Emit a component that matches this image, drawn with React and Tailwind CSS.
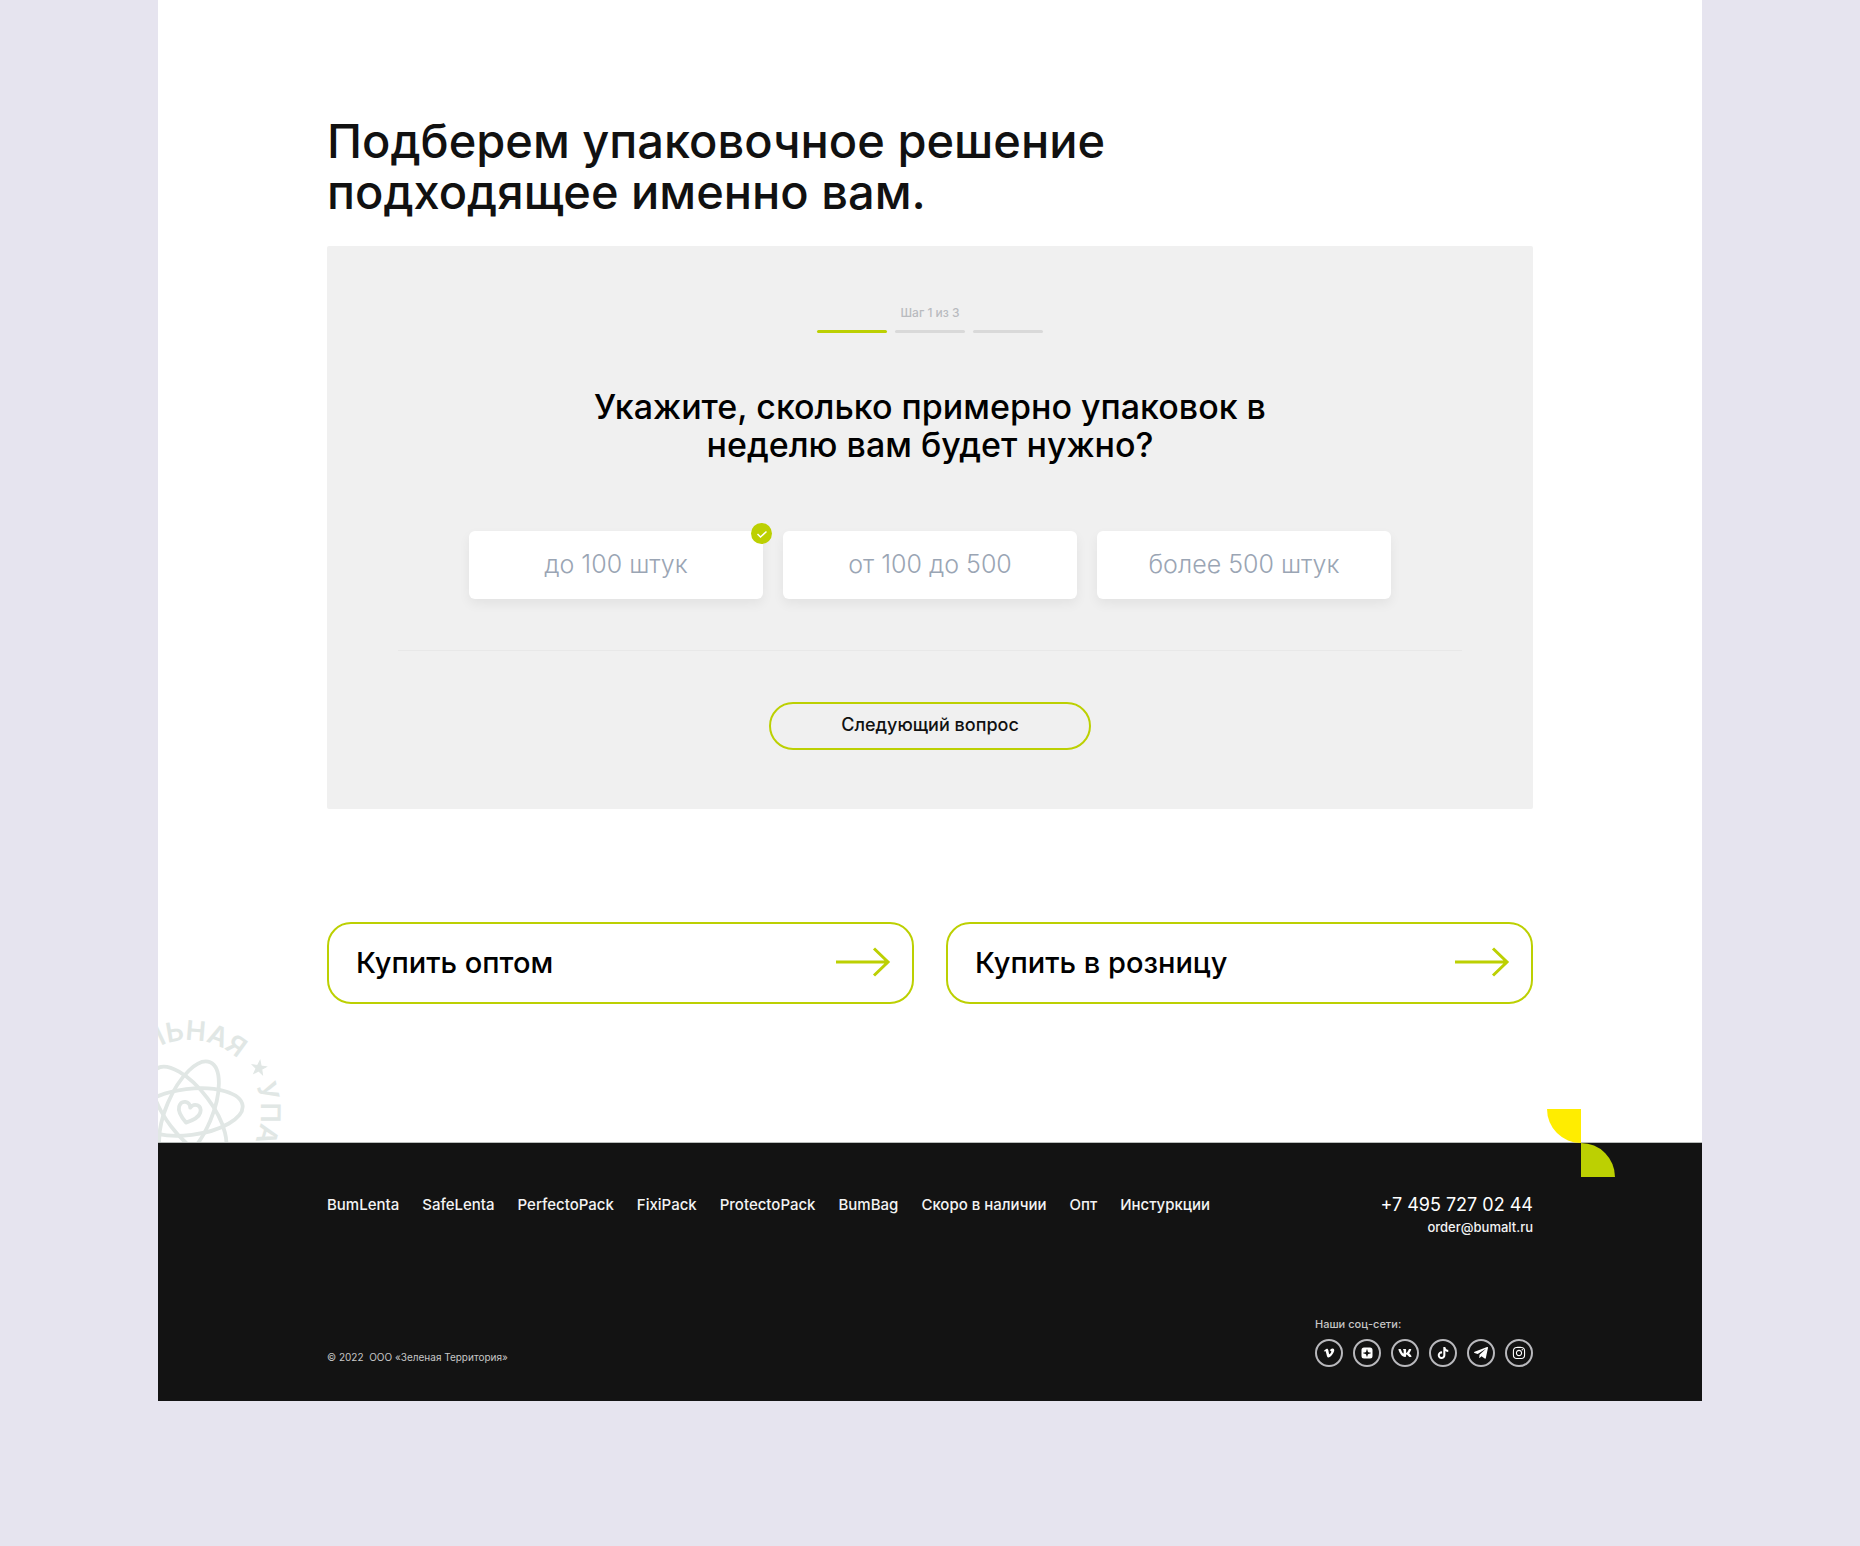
import { useState } from "react";
import { FaInstagram, FaTelegramPlane, FaTiktok, FaVimeoV, FaVk } from "react-icons/fa";

const AMOUNTS = ["до 100 штук", "от 100 до 500", "более 500 штук"];

const NAV_LINKS = [
  "BumLenta",
  "SafeLenta",
  "PerfectoPack",
  "FixiPack",
  "ProtectoPack",
  "BumBag",
  "Скоро в наличии",
  "Опт",
  "Инстуркции",
];

const ZenIcon = ({ className }) => (
  <svg className={className} viewBox="0 0 12 12" fill="currentColor">
    <path
      fillRule="evenodd"
      d="M3 .5h6A2.500 2.500 0 0 1 11.500 3v6A2.500 2.500 0 0 1 9 11.500H3A2.500 2.500 0 0 1 .5 9V3A2.500 2.500 0 0 1 3 .5Zm2.600 1.900C5.500 4.900 4.900 5.500 2.400 5.600v.8C4.900 6.500 5.500 7.100 5.600 9.600h.8C6.500 7.100 7.100 6.500 9.600 6.400v-.8C7.100 5.500 6.500 4.900 6.400 2.400Z"
    />
  </svg>
);

const SOCIALS = [
  { name: "Vimeo", Icon: FaVimeoV, size: "size-3" },
  { name: "Дзен", Icon: ZenIcon, size: "size-3" },
  { name: "VK", Icon: FaVk, size: "size-3.5" },
  { name: "TikTok", Icon: FaTiktok, size: "size-3" },
  { name: "Telegram", Icon: FaTelegramPlane, size: "size-4" },
  { name: "Instagram", Icon: FaInstagram, size: "size-3.5" },
];

const Stamp = () => (
  <svg
    className="absolute bottom-0 left-0 h-[130px] w-[130px] text-[#e1e7e5]"
    viewBox="0 0 130 130"
    fill="none"
    stroke="currentColor"
    strokeWidth="3.800"
    aria-hidden="true"
  >
    <defs>
      <path id="ring" d="M31 172a72 72 0 0 1 0-144a72 72 0 0 1 0 144" />
    </defs>
    <g fill="currentColor" stroke="none" className="font-['Inter',sans-serif] text-[27px] font-semibold">
      <text>
        <textPath href="#ring" startOffset="184">ЛЬНАЯ</textPath>
      </text>
      <text>
        <textPath href="#ring" startOffset="311">УПА</textPath>
      </text>
      <path
        d="M0-7.500L1.800-2.400 7.100-2.300 2.900.9 4.400 6.100 0 3-4.400 6.100-2.900.9-7.100-2.300-1.800-2.400Z"
        transform="translate(101 56) rotate(8)"
        stroke="currentColor"
        strokeWidth="1"
      />
    </g>
    <ellipse cx="31" cy="100" rx="54" ry="23" transform="rotate(-7 31 100)" />
    <ellipse cx="31" cy="100" rx="54" ry="23" transform="rotate(-67 31 100)" />
    <ellipse cx="31" cy="100" rx="54" ry="23" transform="rotate(53 31 100)" />
    <path
      d="M31 111C25 107 20 103 20 97.500C20 90 29 89 31 95.500C33 89 42 90 42 97.500C42 103 37 107 31 111Z"
      transform="rotate(16 31 100)"
      strokeLinejoin="round"
    />
  </svg>
);

const Amount = ({ label, checked, onChange }) => (
  <label className="relative flex h-[68px] flex-1 cursor-pointer items-center justify-center rounded-md bg-white shadow-[0_5px_12px_rgba(0,0,0,0.06)]">
    <input
      type="radio"
      name="amount"
      className="sr-only"
      checked={checked}
      onChange={onChange}
    />
    <span className="text-[25px] font-light text-[#9aa5b4]">{label}</span>
    {checked && (
      <span className="absolute -top-2 -right-[9px] flex size-[21px] items-center justify-center rounded-full bg-[#bcd002]">
        <svg className="size-3" viewBox="0 0 12 12" fill="none" stroke="white" strokeWidth="1.500">
          <path d="M1.500 6l3 3 6-5.500" />
        </svg>
      </span>
    )}
  </label>
);

const BuyLink = ({ children }) => (
  <a
    href="#buy"
    className="flex h-[82px] flex-1 items-center justify-between rounded-3xl border-2 border-[#bcd002] pr-[21px] pl-[27px] text-[29px] font-medium text-black"
  >
    {children}
    <svg className="h-8 w-14" viewBox="0 0 56 32" fill="none" stroke="#bcd002" strokeWidth="3">
      <path d="M1 15h52M39 1.500l14 13.500-14 13.500" />
    </svg>
  </a>
);

export default function App() {
  const [amount, setAmount] = useState(AMOUNTS[0]);

  return (
    <div className="min-h-screen bg-[#e6e4ef] font-['Inter',sans-serif]">
      <div className="mx-auto max-w-[1544px] bg-white">
        <main className="relative border-b border-[#b9bdbb] pt-[115px] pb-[138px]">
          <Stamp />
          <div className="mx-auto max-w-[1206px]">
            <h1 className="text-[47px] leading-[51px] font-medium text-[#111]">
              Подберем упаковочное решение
              <br />
              подходящее именно вам.
            </h1>

            <section className="mt-[29px] rounded-xs bg-[#f0f0f0] px-[71px] pt-[59px] pb-[59px]">
              <p className="text-center text-xs leading-4 font-medium text-[#b9bbbf]">Шаг 1 из 3</p>
              <div className="mt-[9px] flex justify-center gap-2">
                <span className="h-[3px] w-[70px] rounded-full bg-[#bcd002]" />
                <span className="h-[3px] w-[70px] rounded-full bg-[#d9d9d9]" />
                <span className="h-[3px] w-[70px] rounded-full bg-[#d9d9d9]" />
              </div>

              <h2 className="mt-[55px] text-center text-[34px] leading-[38px] font-medium text-black">
                Укажите, сколько примерно упаковок в
                <br />
                неделю вам будет нужно?
              </h2>

              <div className="mx-auto mt-[67px] flex max-w-[922px] gap-5">
                {AMOUNTS.map((label) => (
                  <Amount
                    key={label}
                    label={label}
                    checked={label === amount}
                    onChange={() => setAmount(label)}
                  />
                ))}
              </div>

              <hr className="mt-[51px] border-[#e8e8e8]" />

              <button
                type="button"
                className="mx-auto mt-[51px] flex h-12 w-[322px] items-center justify-center rounded-full border-2 border-[#bcd002] pb-0.5 text-lg font-medium text-[#111]"
              >
                Следующий вопрос
              </button>
            </section>

            <div className="mt-[113px] flex gap-8">
              <BuyLink>Купить оптом</BuyLink>
              <BuyLink>Купить в розницу</BuyLink>
            </div>
          </div>
        </main>

        <footer className="relative bg-[#131313] text-white">
          {/* Leaf over the footer edge */}
          <svg className="absolute -top-[34px] right-[87px] h-[68px] w-[68px]" viewBox="0 0 68 68" aria-hidden="true">
            <path d="M0 0h34v34A34 34 0 0 1 0 0Z" fill="#ffed00" />
            <path d="M34 34a34 34 0 0 1 34 34H34Z" fill="#bcd002" />
          </svg>

          <div className="mx-auto flex max-w-[1206px] flex-col justify-between pt-[52px] pb-[34px]">
            <div className="flex items-start justify-between">
              <nav className="flex gap-[23px] text-[15px] leading-5 font-medium text-[#f3f3f3]">
                {NAV_LINKS.map((link) => (
                  <a key={link} href="#nav">
                    {link}
                  </a>
                ))}
              </nav>
              <div className="flex flex-col items-end">
                <a href="tel:+74957270244" className="text-lg leading-5">
                  +7 495 727 02 44
                </a>
                <a href="mailto:order@bumalt.ru" className="mt-1 text-[13px] leading-4 font-medium text-[#f3f3f3]">
                  order@bumalt.ru
                </a>
              </div>
            </div>

            <div className="mt-[81px] flex items-end justify-between">
              <p className="mb-1 text-[10px] leading-3 text-[#c6c6c6]">© 2022&nbsp; ООО «Зеленая Территория»</p>
              <div>
                <p className="text-[11px] leading-4 font-medium text-[#c6c6c6]">Наши соц-сети:</p>
                <div className="mt-[7px] flex gap-[10px]">
                  {SOCIALS.map(({ name, Icon, size }) => (
                    <a
                      key={name}
                      href="#social"
                      aria-label={name}
                      className="flex size-7 items-center justify-center rounded-full border-2 border-[#b9b9bd]"
                    >
                      <Icon className={size} />
                    </a>
                  ))}
                </div>
              </div>
            </div>
          </div>
        </footer>
      </div>
    </div>
  );
}
